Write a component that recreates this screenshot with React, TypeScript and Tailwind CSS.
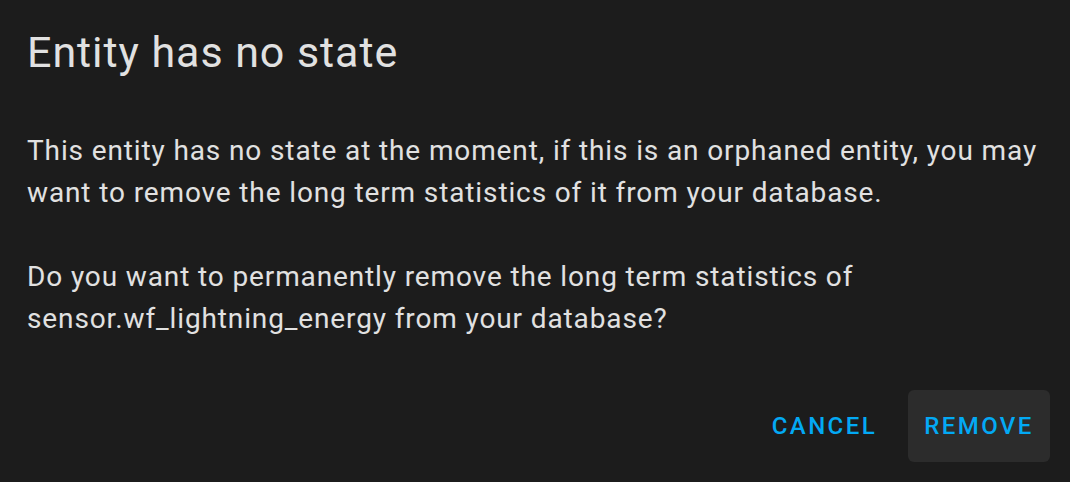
export default function App() {
  return (
    <div className="w-[1070px] h-[482px] bg-[#1c1c1c] flex flex-col font-['Roboto',sans-serif]">
      <h2 className="pl-[27px] pt-[26px] text-[43px] leading-[52px] tracking-[0.022em] text-[#e1e1e1] font-normal">
        Entity has no state
      </h2>
      <div className="pl-[27px] pr-[16px] pt-[52px] text-[28px] leading-[42px] tracking-[0.03125em] text-[#e1e1e1]">
        <p>
          This entity has no state at the moment, if this is an orphaned entity, you may want to remove the long
          term statistics of it from your database.
        </p>
        <p className="mt-[42px]">
          Do you want to permanently remove the long term statistics of
          <br />
          sensor.wf_lightning_energy from your database?
        </p>
      </div>
      <div className="flex justify-end items-center gap-[5px] pr-[20px] mt-auto mb-[20px]">
        <button className="h-[72px] px-[26px] rounded-[6px] text-[#03a9f4] text-[24px] font-medium tracking-[0.1em]">
          CANCEL
        </button>
        <button className="h-[72px] w-[142px] flex items-center justify-center rounded-[6px] bg-[#2c2c2c] text-[#03a9f4] text-[24px] font-medium tracking-[0.1em]">
          REMOVE
        </button>
      </div>
    </div>
  );
}
